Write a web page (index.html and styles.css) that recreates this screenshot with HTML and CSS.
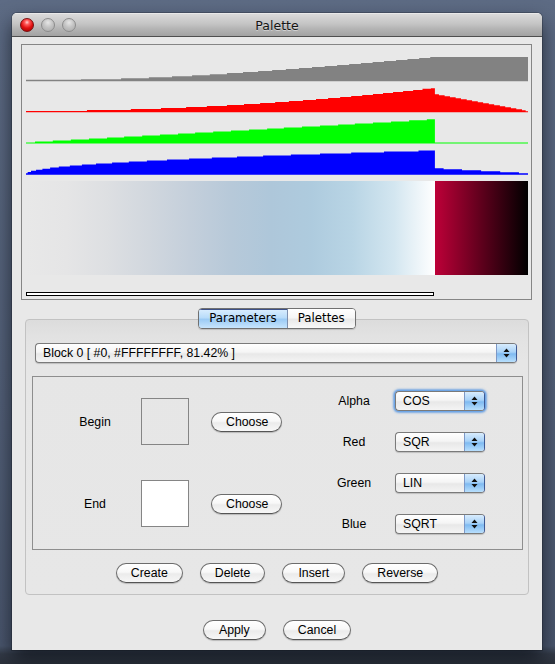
FILE: index.html
```html
<!DOCTYPE html>
<html>
<head>
<meta charset="utf-8">
<title>Palette</title>
<link rel="stylesheet" href="styles.css">
</head>
<body>
<div class="window">
  <div class="titlebar">
    <div class="lights">
      <span class="light red"></span><span class="light gray"></span><span class="light gray"></span>
    </div>
    <div class="title">Palette</div>
    <div></div>
  </div>
  <div class="content">
    <div class="preview">
      <svg class="plots" viewBox="33 30 1499 376" width="502" height="126" preserveAspectRatio="none">
        <path fill="#828282" d="M33 119 H197 V117 H317 V114 H400 V111 H469 V108 H529 V105 H582 V102 H633 V99 H681 V96 H726 V93 H768 V90 H809 V87 H848 V84 H887 V81 H925 V78 H962 V75 H998 V72 H1033 V69 H1068 V66 H1102 V63 H1138 V60 H1172 V57 H1207 V54 H1240 V51 H1532 V123 H33 Z"/>
        <path fill="#ff0000" d="M33 212 H215 V209 H346 V206 H436 V203 H511 V200 H573 V197 H633 V194 H684 V191 H732 V188 H777 V185 H818 V182 H860 V179 H899 V176 H935 V173 H971 V170 H1004 V167 H1037 V164 H1069 V161 H1099 V158 H1129 V155 H1159 V152 H1189 V149 H1217 V146 H1242 V144 H1254 V162 H1266 V165 H1283 V168 H1299 V171 H1316 V174 H1332 V177 H1349 V180 H1365 V183 H1382 V186 H1398 V189 H1415 V192 H1431 V195 H1448 V198 H1464 V201 H1481 V204 H1497 V207 H1514 V210 H1525 V213 H1532 V216 H33 Z"/>
        <path fill="#00ff00" d="M33 306 H60 V303 H113 V300 H167 V297 H221 V294 H275 V291 H326 V288 H380 V285 H433 V282 H487 V279 H538 V276 H592 V273 H645 V270 H699 V267 H753 V264 H803 V261 H857 V258 H911 V255 H965 V252 H1015 V249 H1069 V246 H1123 V243 H1177 V240 H1230 V237 H1254 V306 H1532 V309 H33 Z"/>
        <path fill="#0000ff" d="M33 400 V398 H38 V394 H48 V390 H63 V387 H82 V384 H105 V381 H131 V378 H164 V375 H200 V372 H242 V369 H290 V366 H340 V363 H394 V360 H454 V357 H520 V354 H588 V351 H663 V348 H741 V345 H824 V342 H911 V339 H1004 V336 H1102 V333 H1205 V330 H1254 V383 H1280 V386 H1335 V389 H1392 V392 H1449 V395 H1505 V398 H1532 V402 H33 Z"/>
      </svg>
      <div class="bar"><div class="seg seg0"></div><div class="seg seg1"></div></div>
      <div class="slider"></div>
    </div>

    <div class="tabs">
      <div class="tabset"><span class="tab active">Parameters</span><span class="tab">Palettes</span></div>
    </div>

    <div class="group">
      <div class="combo wide">
        <span class="val">Block 0 [ #0, #FFFFFFFF, 81.42% ]</span>
        <span class="arrows"><svg width="7" height="10" viewBox="0 0 7 10"><path d="M3.5 0.5 L6.5 4 H0.5 Z M0.5 6 H6.5 L3.5 9.5 Z" fill="#111"/></svg></span>
      </div>

      <div class="inner">
        <div class="colors">
          <div class="crow"><span class="lbl">Begin</span><span class="swatch"></span><button class="btn choose">Choose</button></div>
          <div class="crow"><span class="lbl">End</span><span class="swatch white"></span><button class="btn choose">Choose</button></div>
        </div>
        <div class="funcs">
          <div class="frow"><span class="flbl">Alpha</span>
            <div class="combo small focus"><span class="val">COS</span><span class="arrows"><svg width="7" height="10" viewBox="0 0 7 10"><path d="M3.5 0.5 L6.5 4 H0.5 Z M0.5 6 H6.5 L3.5 9.5 Z" fill="#111"/></svg></span></div>
          </div>
          <div class="frow"><span class="flbl">Red</span>
            <div class="combo small"><span class="val">SQR</span><span class="arrows"><svg width="7" height="10" viewBox="0 0 7 10"><path d="M3.5 0.5 L6.5 4 H0.5 Z M0.5 6 H6.5 L3.5 9.5 Z" fill="#111"/></svg></span></div>
          </div>
          <div class="frow"><span class="flbl">Green</span>
            <div class="combo small"><span class="val">LIN</span><span class="arrows"><svg width="7" height="10" viewBox="0 0 7 10"><path d="M3.5 0.5 L6.5 4 H0.5 Z M0.5 6 H6.5 L3.5 9.5 Z" fill="#111"/></svg></span></div>
          </div>
          <div class="frow"><span class="flbl">Blue</span>
            <div class="combo small"><span class="val">SQRT</span><span class="arrows"><svg width="7" height="10" viewBox="0 0 7 10"><path d="M3.5 0.5 L6.5 4 H0.5 Z M0.5 6 H6.5 L3.5 9.5 Z" fill="#111"/></svg></span></div>
          </div>
        </div>
      </div>

      <div class="actions">
        <button class="btn">Create</button>
        <button class="btn">Delete</button>
        <button class="btn">Insert</button>
        <button class="btn">Reverse</button>
      </div>
    </div>

    <div class="footer">
      <button class="btn">Apply</button>
      <button class="btn">Cancel</button>
    </div>
  </div>
</div>
</body>
</html>
```
FILE: styles.css
```css
* { box-sizing: border-box; }
html, body { margin: 0; }
body {
  width: 555px;
  height: 664px;
  overflow: hidden;
  padding: 13px 0 0 12px;
  background: linear-gradient(180deg, #5d6b84 0px, #525f77 400px, #4a566d 646px, #333a47 654px, #2c323c 664px);
  font-family: "Liberation Sans", Arial, sans-serif;
  font-size: 12px;
  color: #000;
}
.window {
  width: 530px;
  height: 637px;
  border-radius: 5px 5px 0 0;
  background: #e8e8e8;
  box-shadow: 0 10px 20px rgba(10, 14, 22, 0.7), 0 0 0 1px rgba(0, 0, 0, 0.2);
  overflow: hidden;
  display: flex;
  flex-direction: column;
}
.titlebar {
  flex: none;
  height: 24px;
  display: grid;
  grid-template-columns: 1fr auto 1fr;
  align-items: center;
  background: linear-gradient(180deg, #dadada 0%, #c4c4c4 45%, #b2b2b2 70%, #a2a2a2 100%);
  border-bottom: 1px solid #4e4e4e;
  border-top: 1px solid #e9e9e9;
}
.lights { display: flex; gap: 7px; padding-left: 8px; }
.light {
  width: 14px;
  height: 14px;
  border-radius: 50%;
  display: block;
}
.light.red {
  background: radial-gradient(circle at 50% 28%, #ffd0d0 0, #ff5a5a 22%, #e01010 55%, #9a0000 100%);
  border: 1px solid #7a1010;
}
.light.gray {
  background: radial-gradient(circle at 50% 30%, #e6e6e6 0, #c4c4c4 45%, #a8a8a8 100%);
  border: 1px solid #8c8c8c;
}
.title {
  font-family: "DejaVu Sans", sans-serif;
  font-size: 12.5px;
  color: #141414;
  text-shadow: 0 1px 0 rgba(255, 255, 255, 0.45);
}

.content { flex: 1; }

.preview {
  margin: 7px 0 0 9px;
  width: 511px;
  height: 256px;
  border: 1px solid #858585;
  padding: 5px 0 0 4px;
}
.plots { display: block; }
.bar {
  display: flex;
  width: 502px;
  height: 94px;
  margin-top: 5px;
}
.seg0 {
  width: 81.42%;
  background: linear-gradient(90deg,
    #e8e8e8 0%, rgb(229,229,230) 10%, rgb(221,223,226) 20%, rgb(209,215,222) 30%,
    rgb(196,207,219) 40%, rgb(183,201,217) 50%, rgb(174,199,218) 60%,
    rgb(174,203,222) 70%, rgb(185,213,229) 80%, rgb(211,230,240) 90%, #ffffff 100%);
}
.seg1 {
  flex: 1;
  background: linear-gradient(90deg, #bd0038 0%, #5e001c 50%, #000000 100%);
}
.slider {
  width: 408px;
  height: 4px;
  border: 1px solid #000;
  background: #fff;
  margin-top: 17px;
}

.tabs {
  display: flex;
  justify-content: center;
  margin-top: 8px;
  margin-bottom: -10px;
  position: relative;
  z-index: 1;
}
.tabset {
  display: flex;
  height: 21px;
  border: 1px solid #707070;
  border-radius: 4px;
  overflow: hidden;
  box-shadow: 0 1px 1px rgba(0, 0, 0, 0.15);
}
.tab {
  font-family: "DejaVu Sans", sans-serif;
  font-size: 11.8px;
  line-height: 19px;
  padding: 0 10px;
  color: #000;
  background: linear-gradient(180deg, #ffffff 0%, #f6f6f6 45%, #e9e9e9 55%, #f9f9f9 100%);
}
.tab.active {
  padding: 0 10px 0 10px;
  background: linear-gradient(180deg, #dbeefe 0%, #b9dcfa 45%, #9ccbf5 55%, #c7e5fd 100%);
  border-right: 1px solid #7d8fae;
  box-shadow: inset 0 1px 0 #3c4f86;
}

.group {
  margin: 0 13px;
  height: 276px;
  border: 1px solid #c2c2c2;
  border-radius: 4px;
  background: linear-gradient(180deg, #dcdcdc 0px, #e2e2e2 16px, #e6e6e6 40px, #e7e7e7 100%);
  padding-top: 23px;
}

.combo {
  height: 20px;
  display: flex;
  border: 1px solid #7a7a7a;
  border-right-color: #3d5893;
  border-radius: 4px;
  overflow: hidden;
  background: linear-gradient(180deg, #ffffff 0%, #f5f5f5 45%, #e8e8e8 55%, #f4f4f4 100%);
  box-shadow: 0 1px 1px rgba(0, 0, 0, 0.18);
}
.combo .val {
  flex: 1;
  padding-left: 7px;
  line-height: 18px;
  font-size: 12.3px;
  white-space: nowrap;
}
.combo .arrows {
  width: 20px;
  flex: none;
  display: flex;
  align-items: center;
  justify-content: center;
  border-left: 1px solid #7d98c6;
  background: linear-gradient(180deg, #d8ecfd 0%, #a8d2f8 45%, #7fbaf1 55%, #b8dffd 100%);
}
.combo.wide { margin-left: 9px; width: 482px; }
.combo.small { width: 90px; margin-left: 1px; }
.combo.focus {
  box-shadow: 0 0 0 1px #6fa6e6, 0 0 2px 2px rgba(85, 150, 225, 0.75);
}

.inner {
  margin: 13px 0 0 6px;
  width: 491px;
  height: 174px;
  border: 1px solid #8e8e8e;
  display: flex;
}
.colors {
  display: flex;
  flex-direction: column;
  padding-top: 21px;
  gap: 35px;
}
.crow { display: flex; align-items: center; height: 47px; }
.lbl {
  width: 108px;
  padding-left: 16px;
  text-align: center;
  font-size: 12.3px;
}
.swatch {
  width: 48px;
  height: 47px;
  border: 1px solid #858585;
  display: block;
}
.swatch.white { background: #fff; }
.crow .btn { margin-left: 22px; width: 71px; }

.funcs {
  margin-left: 32px;
  display: flex;
  flex-direction: column;
  padding-top: 14px;
  gap: 21px;
}
.frow { display: flex; align-items: center; height: 20px; }
.flbl { width: 80px; text-align: center; font-size: 12.3px; }

.btn {
  height: 20px;
  min-width: 63px;
  padding: 0 14px;
  border: 1px solid #6c6c6c;
  border-bottom-color: #555;
  border-radius: 10px;
  background: linear-gradient(180deg, #ffffff 0%, #f8f8f8 45%, #ebebeb 55%, #f7f7f7 100%);
  box-shadow: 0 1px 1px rgba(0, 0, 0, 0.2);
  font-family: "Liberation Sans", Arial, sans-serif;
  font-size: 12.3px;
  line-height: 18px;
  color: #000;
  margin: 0;
}

.actions {
  display: flex;
  justify-content: center;
  gap: 17px;
  margin-top: 13px;
}
.footer {
  display: flex;
  justify-content: center;
  gap: 17px;
  margin-top: 25px;
}
```
